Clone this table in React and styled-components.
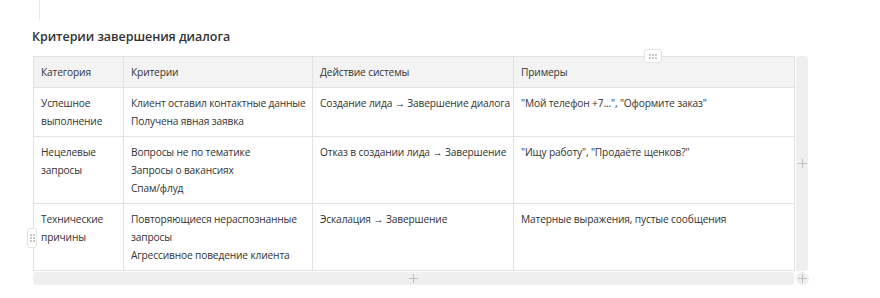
import React from "react";
import styled, { createGlobalStyle } from "styled-components";

const GlobalStyle = createGlobalStyle`
  body {
    margin: 0;
    background: #ffffff;
    font-family: "Open Sans", "Noto Sans", sans-serif;
    color: #333333;
  }
`;

const Page = styled.div`
  width: 880px;
  height: 298px;
  padding-left: 32px;
  box-sizing: border-box;
  overflow: hidden;
`;

const Gutter = styled.div`
  width: 1px;
  height: 20px;
  margin-left: 7px;
  background: #e6e6e6;
`;

const Title = styled.h3`
  margin: 8px 0 0 0;
  font-size: 12.5px;
  line-height: 18px;
  font-weight: 600;
  letter-spacing: -0.05px;
  color: #333333;
`;

const Frame = styled.div`
  position: relative;
  margin-top: 10px;
  margin-left: 1px;
  display: grid;
  grid-template-columns: 761px 12px;
  grid-template-rows: auto 13px;
  column-gap: 2px;
  row-gap: 1px;
`;

const Table = styled.table`
  border-collapse: collapse;
  table-layout: fixed;
  width: 761px;
  font-size: 10.2px;
  line-height: 18px;
  letter-spacing: -0.15px;
  color: #333333;
`;

const Th = styled.th`
  box-sizing: border-box;
  background: #f3f3f3;
  border: 1px solid #e2e2e2;
  font-weight: 400;
  text-align: left;
  padding: 6px 7px 6px 7px;
  width: ${(p) => p.w}px;
`;

const Td = styled.td`
  border: 1px solid #e2e2e2;
  vertical-align: top;
  padding: 6px 7px 6px 7px;
`;

const Line = styled.div`
  white-space: nowrap;
`;

const Bar = styled.div`
  background: #efefef;
  border-radius: 3px;
  display: flex;
  align-items: center;
  justify-content: center;
`;

const Corner = styled.div`
  width: 13px;
  height: 13px;
  border-radius: 50%;
  background: #efefef;
  display: flex;
  align-items: center;
  justify-content: center;
`;

const Handle = styled.div`
  position: absolute;
  left: ${(p) => p.x}px;
  top: ${(p) => p.y}px;
  width: ${(p) => p.w}px;
  height: ${(p) => p.h}px;
  box-sizing: border-box;
  background: #ffffff;
  border: 1px solid #e4e4e4;
  border-radius: 3px;
  display: grid;
  grid-template-columns: repeat(${(p) => p.cols}, 2px);
  gap: 1px;
  place-content: center;
`;

const Dot = styled.span`
  width: 2px;
  height: 2px;
  background: #c8c8c8;
`;

function Plus() {
  return (
    <svg width="9" height="9" viewBox="0 0 9 9">
      <path d="M4.5 0v9M0 4.5h9" stroke="#bdbdbd" strokeWidth="1" />
    </svg>
  );
}

const columns = [
  { title: "Категория", w: 90 },
  { title: "Критерии", w: 189 },
  { title: "Действие системы", w: 201 },
  { title: "Примеры", w: 281 },
];

const rows = [
  [
    ["Успешное", "выполнение"],
    ["Клиент оставил контактные данные", "Получена явная заявка"],
    ["Создание лида → Завершение диалога"],
    ['"Мой телефон +7...", "Оформите заказ"'],
  ],
  [
    ["Нецелевые", "запросы"],
    ["Вопросы не по тематике", "Запросы о вакансиях", "Спам/флуд"],
    ["Отказ в создании лида → Завершение"],
    ['"Ищу работу", "Продаёте щенков?"'],
  ],
  [
    ["Технические", "причины"],
    ["Повторяющиеся нераспознанные", "запросы", "Агрессивное поведение клиента"],
    ["Эскалация → Завершение"],
    ["Матерные выражения, пустые сообщения"],
  ],
];

export default function App() {
  return (
    <Page>
      <GlobalStyle />
      <Gutter />
      <Title>Критерии завершения диалога</Title>
      <Frame>
        <Table>
          <thead>
            <tr>
              {columns.map((c) => (
                <Th key={c.title} w={c.w}>
                  {c.title}
                </Th>
              ))}
            </tr>
          </thead>
          <tbody>
            {rows.map((r, i) => (
              <tr key={i}>
                {r.map((cell, j) => (
                  <Td key={j}>
                    {cell.map((t) => (
                      <Line key={t}>{t}</Line>
                    ))}
                  </Td>
                ))}
              </tr>
            ))}
          </tbody>
        </Table>
        <Bar>
          <Plus />
        </Bar>
        <Bar>
          <Plus />
        </Bar>
        <Corner>
          <Plus />
        </Corner>
        <Handle x={611} y={-7} w={18} h={14} cols={3}>
          {Array.from({ length: 6 }).map((_, i) => (
            <Dot key={i} />
          ))}
        </Handle>
        <Handle x={-6} y={172} w={10} h={20} cols={2}>
          {Array.from({ length: 6 }).map((_, i) => (
            <Dot key={i} />
          ))}
        </Handle>
      </Frame>
    </Page>
  );
}
